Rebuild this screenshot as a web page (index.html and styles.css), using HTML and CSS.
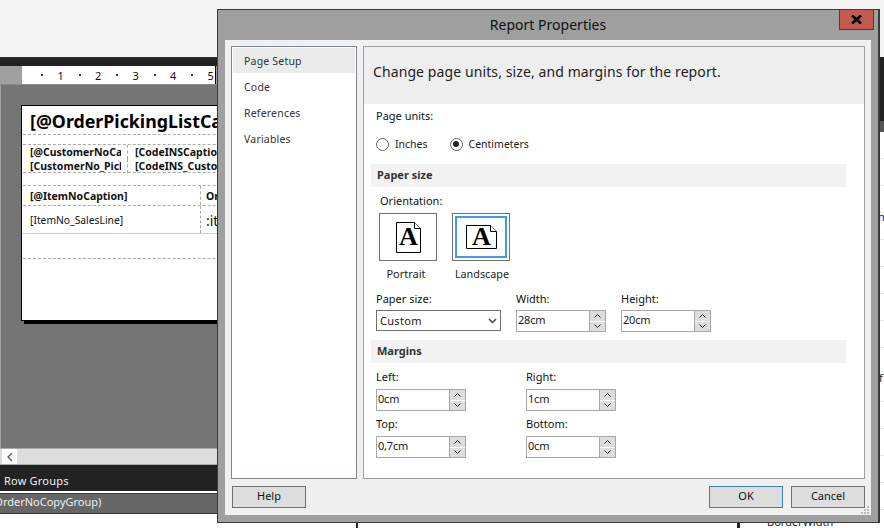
FILE: index.html
```html
<!DOCTYPE html>
<html lang="en">
<head>
<meta charset="utf-8">
<title>Report Properties</title>
<link rel="stylesheet" href="styles.css">
</head>
<body>
<div class="desktop">
  <div class="app">
    <div class="app-top"></div>
    <div class="app-dark"></div>
    <div class="ruler-row">
      <div class="ruler">
        <span class="tick"></span><span class="num">1</span><span class="tick"></span><span class="num">2</span><span class="tick"></span><span class="num">3</span><span class="tick"></span><span class="num">4</span><span class="tick"></span><span class="num">5</span>
      </div>
    </div>
    <div class="canvas">
      <div class="page">
        <div class="r-title">[@OrderPickingListCaption]</div>
        <div class="r-cust">
          <div class="r-cust-row"><span class="cell-a">[@CustomerNoCaption]</span><span class="cell-b">[CodeINSCaption]</span></div>
          <div class="r-cust-row"><span class="cell-a">[CustomerNo_PickingList]</span><span class="cell-b">[CodeINS_Customer]</span></div>
        </div>
        <div class="r-head"><span class="cell-c">[@ItemNoCaption]</span><span class="cell-d">Order</span></div>
        <div class="r-line"><span class="cell-e">[ItemNo_SalesLine]</span><span class="cell-f">:item</span></div>
        <div class="r-empty"></div>
      </div>
    </div>
    <div class="hscroll"><span class="hscroll-btn"><svg width="8" height="10" viewBox="0 0 8 10"><path d="M6 1 2 5l4 4" fill="none" stroke="#555" stroke-width="1.3"/></svg></span></div>
    <div class="groups">Row Groups</div>
    <div class="groups-line"></div>
    <div class="group-item">(OrderNoCopyGroup)</div>
    <div class="bottom-rest">
      <span class="bottom-tick-a"></span>
      <span class="bottom-tick-b"></span>
      <span class="prop-name">BorderWidth</span>
    </div>
  </div>

  <div class="side-strip">
    <div class="strip-top"></div>
    <div class="strip-dark"></div>
    <div class="strip-rows">
      <span class="strip-char strip-n">n</span>
      <span class="strip-char strip-f">f</span>
    </div>
  </div>

  <section class="dialog">
    <header class="titlebar">
      <h1 class="dialog-title">Report Properties</h1>
      <button class="close" type="button" aria-label="Close"><svg width="11" height="9" viewBox="0 0 11 9"><path d="M1 .5 10 8.5M10 .5 1 8.5" stroke="#000" stroke-width="2.6" fill="none"/></svg></button>
    </header>
    <div class="dialog-body">
      <div class="panes">
        <nav class="nav">
          <div class="nav-item active">Page Setup</div>
          <div class="nav-item">Code</div>
          <div class="nav-item">References</div>
          <div class="nav-item">Variables</div>
        </nav>
        <main class="pane">
          <div class="pane-head">Change page units, size, and margins for the report.</div>
          <div class="form">
            <div class="lbl units-label">Page units:</div>
            <div class="radios">
              <label class="radio"><span class="dot"></span>Inches</label>
              <label class="radio"><span class="dot on"></span>Centimeters</label>
            </div>
            <div class="band">Paper size</div>
            <div class="lbl orient-label">Orientation:</div>
            <div class="orients">
              <div class="orient">
                <div class="orient-btn">
                  <svg width="25" height="31" viewBox="0 0 25 31"><path d="M.5.5h18l6 6v24H.5z" fill="#fff" stroke="#000"/><path d="M18.500.5v6h6" fill="#fff" stroke="#000"/><text x="12.500" y="23" text-anchor="middle" class="doc-a">A</text></svg>
                </div>
                <div class="orient-name name-portrait">Portrait</div>
              </div>
              <div class="orient">
                <div class="orient-btn selected">
                  <svg width="31" height="24" viewBox="0 0 31 24"><path d="M.5.5h24l6 6v17H.5z" fill="#fff" stroke="#000"/><path d="M24.500.5v6h6" fill="#fff" stroke="#000"/><text x="15.500" y="19.500" text-anchor="middle" class="doc-a">A</text></svg>
                </div>
                <div class="orient-name name-landscape">Landscape</div>
              </div>
            </div>
            <div class="size-grid">
              <div class="field">
                <div class="lbl">Paper size:</div>
                <div class="select"><span>Custom</span><svg width="9" height="6" viewBox="0 0 9 6"><path d="M1 1l3.500 3.500L8 1" fill="none" stroke="#444" stroke-width="1.500"/></svg></div>
              </div>
              <div class="field">
                <div class="lbl">Width:</div>
                <div class="spin"><span class="val">28cm</span><span class="spin-btns"><span class="sb"><svg width="7" height="4" viewBox="0 0 7 4"><path d="M.5 3.500l3-3 3 3" fill="none" stroke="#222"/></svg></span><span class="sb"><svg width="7" height="4" viewBox="0 0 7 4"><path d="M.5.5l3 3 3-3" fill="none" stroke="#222"/></svg></span></span></div>
              </div>
              <div class="field">
                <div class="lbl">Height:</div>
                <div class="spin"><span class="val">20cm</span><span class="spin-btns"><span class="sb"><svg width="7" height="4" viewBox="0 0 7 4"><path d="M.5 3.500l3-3 3 3" fill="none" stroke="#222"/></svg></span><span class="sb"><svg width="7" height="4" viewBox="0 0 7 4"><path d="M.5.5l3 3 3-3" fill="none" stroke="#222"/></svg></span></span></div>
              </div>
            </div>
            <div class="band band-margins">Margins</div>
            <div class="margin-grid">
              <div class="field">
                <div class="lbl">Left:</div>
                <div class="spin"><span class="val">0cm</span><span class="spin-btns"><span class="sb"><svg width="7" height="4" viewBox="0 0 7 4"><path d="M.5 3.500l3-3 3 3" fill="none" stroke="#222"/></svg></span><span class="sb"><svg width="7" height="4" viewBox="0 0 7 4"><path d="M.5.5l3 3 3-3" fill="none" stroke="#222"/></svg></span></span></div>
              </div>
              <div class="field">
                <div class="lbl">Right:</div>
                <div class="spin"><span class="val">1cm</span><span class="spin-btns"><span class="sb"><svg width="7" height="4" viewBox="0 0 7 4"><path d="M.5 3.500l3-3 3 3" fill="none" stroke="#222"/></svg></span><span class="sb"><svg width="7" height="4" viewBox="0 0 7 4"><path d="M.5.5l3 3 3-3" fill="none" stroke="#222"/></svg></span></span></div>
              </div>
              <div class="field">
                <div class="lbl">Top:</div>
                <div class="spin"><span class="val">0,7cm</span><span class="spin-btns"><span class="sb"><svg width="7" height="4" viewBox="0 0 7 4"><path d="M.5 3.500l3-3 3 3" fill="none" stroke="#222"/></svg></span><span class="sb"><svg width="7" height="4" viewBox="0 0 7 4"><path d="M.5.5l3 3 3-3" fill="none" stroke="#222"/></svg></span></span></div>
              </div>
              <div class="field">
                <div class="lbl">Bottom:</div>
                <div class="spin"><span class="val">0cm</span><span class="spin-btns"><span class="sb"><svg width="7" height="4" viewBox="0 0 7 4"><path d="M.5 3.500l3-3 3 3" fill="none" stroke="#222"/></svg></span><span class="sb"><svg width="7" height="4" viewBox="0 0 7 4"><path d="M.5.5l3 3 3-3" fill="none" stroke="#222"/></svg></span></span></div>
              </div>
            </div>
          </div>
        </main>
      </div>
      <footer class="footer">
        <button class="btn" type="button">Help</button>
        <div class="footer-right">
          <button class="btn default" type="button">OK</button>
          <button class="btn" type="button">Cancel</button>
        </div>
      </footer>
      <svg class="grip" width="8" height="8" viewBox="0 0 8 8"><path d="M6 0h2v2H6zM6 3h2v2H6zM3 3h2v2H3zM6 6h2v2H6zM3 6h2v2H3zM0 6h2v2H0z" fill="#bbb"/></svg>
    </div>
  </section>
</div>
</body>
</html>
```

FILE: styles.css
```css
* { box-sizing: border-box; }
html, body { margin: 0; padding: 0; background: #fff; }
body { font-family: "Noto Sans", "Open Sans", sans-serif; font-size: 11px; color: #1e1e1e; }
.desktop { position: relative; width: 884px; height: 528px; overflow: hidden; background: #fff; }

/* background application */
.app { width: 880px; display: flex; flex-direction: column; height: 528px; }
.app-top { height: 57px; background: #f3f3f3; flex: none; }
.app-dark { height: 9px; background: #222; border-top: 1px solid #333; flex: none; }
.ruler-row { height: 18px; background: #a0a0a0; padding-left: 22px; flex: none; }
.ruler { width: 194px; height: 18px; background: #fff; display: flex; align-items: center; padding-left: 19px; font-size: 11px; color: #111; border-right: 1px solid #000; overflow: hidden; }
.tick { width: 2px; height: 2px; background: #333; flex: none; }
.num { width: 35.500px; flex: none; text-align: center; }
.canvas { height: 364px; background: #757575; border-left: 1px solid #a0a0a0; border-top: 1px solid #8c8c8c; padding: 20px 0 0 20px; overflow: hidden; flex: none; }
.page { width: 500px; height: 216px; background: #fff; border: 1px solid #000; box-shadow: 3px 3px 0 #000; font-family: "Noto Sans", sans-serif; color: #101010; padding-left: 1px; }
.r-title { height: 29px; font-size: 17.800px; font-weight: 700; padding: 0 0 0 7px; line-height: 30px; white-space: nowrap; color: #000; border-bottom: 1px dashed #aaa; }
.r-cust { margin-top: 9px; border-top: 1px dashed #aaa; border-bottom: 1px dashed #aaa; height: 29px; }
.r-cust-row { display: flex; height: 14px; font-size: 10.500px; font-weight: 700; line-height: 14px; white-space: nowrap; }
.cell-a { width: 98px; margin-right: 6px; padding-left: 7px; overflow: hidden; }
.cell-b { padding-left: 7px; border-left: 1px dashed #aaa; }
.r-head { margin-top: 12px; height: 21px; display: flex; border-top: 1px dashed #aaa; border-bottom: 1px dashed #aaa; font-size: 10.500px; font-weight: 700; line-height: 21px; white-space: nowrap; }
.cell-c { width: 178px; padding-left: 7px; border-right: 1px dashed #aaa; }
.cell-d { padding-left: 5px; }
.r-line { height: 28px; display: flex; border-bottom: 1px solid #ccc; line-height: 29px; font-size: 10.300px; white-space: nowrap; }
.cell-e { width: 178px; padding-left: 7px; border-right: 1px dashed #aaa; }
.cell-f { padding-left: 5px; font-size: 14px; }
.r-empty { height: 25px; border-bottom: 1px dashed #aaa; }
.hscroll { height: 17px; background: #ddd; border-top: 1px solid #aaa; border-bottom: 1px solid #aaa; padding-left: 2px; display: flex; flex: none; }
.hscroll-btn { width: 15px; background: #fff; display: flex; align-items: center; justify-content: center; }
.groups { height: 26px; background: #222; color: #f0f0f0; font-size: 11px; padding: 6px 0 0 4px; letter-spacing: .2px; line-height: 20px; flex: none; }
.groups-line { height: 3px; background: #fff; border-bottom: 1px solid #444; flex: none; }
.group-item { height: 20px; background: #666; color: #eee; border-bottom: 1px solid #333; font-size: 11px; line-height: 16px; text-indent: -9px; white-space: nowrap; flex: none; }
.bottom-rest { flex: 1; position: relative; background: #fff; }
.bottom-tick-a { position: absolute; left: 356px; top: 0; width: 2px; height: 14px; background: #222; }
.bottom-tick-b { position: absolute; left: 737px; top: 0; width: 3px; height: 14px; background: #222; }
.prop-name { position: absolute; left: 767px; top: 2px; font-size: 11px; line-height: 12px; color: #222; }

.side-strip { position: absolute; right: 0; top: 0; bottom: 0; width: 4px; overflow: hidden; display: flex; flex-direction: column; background: #fff; }
.strip-top { height: 57px; background: #f3f3f3; }
.strip-dark { height: 75px; background: linear-gradient(#222 0 85%, #555 85%); }
.strip-rows { flex: 1; position: relative; background: repeating-linear-gradient(#fff 0 26px, #e6e6e6 26px 27px); }
.strip-char { position: absolute; left: 0; font-size: 11px; line-height: 12px; color: #222; }
.strip-n { top: 79px; left: -2px; }
.strip-f { top: 240px; left: -1px; }

/* dialog (a window over the application) */
.dialog { position: absolute; left: 217px; top: 9px; width: 663px; height: 514px; background: #9f9f9f; border: 1px solid #3a3a3a; border-width: 1px 2px 1px 1px; display: flex; flex-direction: column; padding: 0 7px 7px 7px; }
.titlebar { height: 30px; display: flex; align-items: center; justify-content: center; position: relative; flex: none; padding-bottom: 2px; }
.dialog-title { margin: 0; font-size: 14px; font-weight: 400; color: #111; letter-spacing: .02px; }
.close { position: absolute; right: -3px; top: -1px; width: 35px; height: 21px; background: #c25a50; border: 1px solid #5a3535; padding: 0; display: flex; align-items: center; justify-content: center; }
.dialog-body { flex: 1; background: #f0f0f0; padding: 6px 6px 0 6px; display: flex; flex-direction: column; position: relative; }
.panes { display: flex; gap: 6px; height: 433px; flex: none; }
.nav { width: 126px; background: #fff; border: 1px solid #7f8790; padding: 1px; }
.nav-item { height: 26px; line-height: 26px; padding-left: 11px; font-size: 10.500px; letter-spacing: .2px; color: #333; }
.nav-item.active { background: #ebebeb; height: 25px; line-height: 26px; margin-bottom: 1px; }
.pane { flex: 1; background: #fff; border: 1px solid #a0a0a0; display: flex; flex-direction: column; }
.pane-head { height: 57px; background: #eee; padding: 0 0 0 9px; font-size: 14px; line-height: 50px; letter-spacing: .1px; color: #222; white-space: nowrap; flex: none; }
.form { padding: 0 18px 0 7px; display: flex; flex-direction: column; }
.lbl { font-size: 11px; line-height: 14px; color: #111; height: 14px; white-space: nowrap; }
.units-label { margin: 5px 0 0 5px; }
.radios { display: flex; margin: 14px 0 0 5px; gap: 22px; height: 14px; }
.radio { display: flex; align-items: center; gap: 6px; font-size: 10.500px; color: #222; }
.dot { width: 13px; height: 13px; border: 1px solid #666; border-radius: 50%; background: #fff; position: relative; display: block; flex: none; }
.dot.on::after { content: ""; position: absolute; left: 2.500px; top: 2.500px; width: 6px; height: 6px; border-radius: 50%; background: #222; }
.band { background: #f2f2f2; height: 23px; line-height: 22px; padding-left: 6px; font-size: 11px; font-weight: 700; color: #333; margin-top: 13px; flex: none; }
.band-margins { margin-top: 8px; }
.orient-label { margin: 7px 0 0 9px; }
.orients { display: flex; gap: 15px; margin: 5px 0 0 8px; }
.orient { width: 58px; display: flex; flex-direction: column; align-items: center; }
.orient-btn { width: 58px; height: 48px; background: #fff; border: 1px solid #707070; display: flex; align-items: center; justify-content: center; }
.orient-btn.selected { box-shadow: inset 0 0 0 2px #fff, inset 0 0 0 4px #3c9cf0; }
.orient-name { font-size: 11px; margin-top: 6px; line-height: 14px; white-space: nowrap; color: #222; }
.name-portrait { margin-right: 4px; }
.name-landscape { margin-left: 2px; font-size: 10.800px; }
.doc-a { font-family: "Liberation Serif", serif; font-weight: 700; font-size: 26px; fill: #000; }
.size-grid { display: grid; grid-template-columns: 125px 90px 90px; column-gap: 15px; margin: 11px 0 0 5px; }
.size-grid .field { gap: 4px; }
.margin-grid { display: grid; grid-template-columns: 90px 90px; column-gap: 60px; row-gap: 6px; margin: 7px 0 0 5px; }
.field { display: flex; flex-direction: column; gap: 5px; }
.select { height: 21px; border: 1px solid #707070; background: #fff; display: flex; align-items: center; justify-content: space-between; padding: 0 3px; font-size: 11px; color: #222; letter-spacing: .3px; }
.spin { height: 22px; border: 1px solid #a8a8a8; background: #fff; display: flex; align-items: stretch; font-size: 11px; color: #222; }
.val { flex: 1; padding: 0 0 0 1px; line-height: 18px; letter-spacing: -.2px; }
.spin-btns { width: 16px; display: flex; flex-direction: column; gap: 1px; background: #fff; border-left: 1px solid #a8a8a8; }
.sb { flex: 1; background: #ddd; display: flex; align-items: center; justify-content: center; }
.footer { display: flex; justify-content: space-between; margin-top: 7px; padding-left: 1px; }
.footer-right { display: flex; gap: 8px; }
.btn { width: 74px; height: 22px; background: #ddd; border: 1px solid #707070; font-family: "Noto Sans", sans-serif; font-size: 11px; line-height: 18px; color: #111; padding: 0 0 2px; }
.btn.default { border-color: #3c7fb1; }
.grip { position: absolute; right: 2px; bottom: 1px; }
```
